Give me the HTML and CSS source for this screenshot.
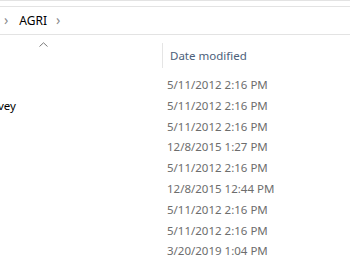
FILE: index.html
```html
<!DOCTYPE html>
<html lang="en">
<head>
    <meta charset="UTF-8" />
    <title>AGRI</title>
    <link rel="stylesheet" href="styles.css">
</head>
<body>
    <div class="window">
        <div class="top-strip"></div>
        <div class="address-bar">
            <span class="chev">&#8250;</span>
            <span class="crumb">AGRI</span>
            <span class="chev">&#8250;</span>
        </div>
        <div class="list">
            <div class="col-header">
                <div class="name-head">
                    <svg class="sort-caret" width="9" height="5" viewBox="0 0 9 5">
                        <path d="M0.5 4.5 L4.5 0.8 L8.5 4.5" fill="none" stroke="#7a7a7a" stroke-width="1" />
                    </svg>
                </div>
                <div class="date-head">Date modified</div>
            </div>
            <div class="rows">
                <div class="row"><span class="name"></span><span class="date">5/11/2012 2:16 PM</span></div>
                <div class="row"><span class="name">vey</span><span class="date">5/11/2012 2:16 PM</span></div>
                <div class="row"><span class="name"></span><span class="date">5/11/2012 2:16 PM</span></div>
                <div class="row"><span class="name"></span><span class="date">12/8/2015 1:27 PM</span></div>
                <div class="row"><span class="name"></span><span class="date">5/11/2012 2:16 PM</span></div>
                <div class="row"><span class="name"></span><span class="date">12/8/2015 12:44 PM</span></div>
                <div class="row"><span class="name"></span><span class="date">5/11/2012 2:16 PM</span></div>
                <div class="row"><span class="name"></span><span class="date">5/11/2012 2:16 PM</span></div>
                <div class="row"><span class="name"></span><span class="date">3/20/2019 1:04 PM</span></div>
            </div>
        </div>
    </div>
</body>
</html>
```

FILE: styles.css
```css
body {
    margin: 0;
    background: #ffffff;
    font-family: "Noto Sans", "Open Sans", sans-serif;
    font-size: 11.5px;
    overflow: hidden;
}
.window {
    width: 350px;
    height: 265px;
    overflow: hidden;
}
.top-strip {
    height: 5px;
    border-top: 1px solid #e3e3e3;
    border-bottom: 1px solid #e3e3e3;
}
.address-bar {
    height: 27px;
    border-bottom: 1px solid #e3e3e3;
    display: flex;
    align-items: center;
    padding-left: 4px;
    color: #000;
}
.chev {
    color: #8a8a8a;
    font-size: 14px;
    line-height: 1;
    margin-top: -2px;
}
.crumb {
    margin: 0 9px 0 11px;
    font-size: 12px;
}
.col-header {
    display: flex;
    height: 36px;
}
.name-head {
    width: 162px;
    position: relative;
}
.sort-caret {
    position: absolute;
    left: 39px;
    top: 7px;
}
.date-head {
    border-left: 1px solid #e5e5e5;
    height: 25px;
    line-height: 25px;
    margin-top: 8px;
    padding-left: 7px;
    color: #4c607a;
}
.rows {
    padding-top: 4px;
}
.row {
    display: flex;
    height: 20.8px;
    line-height: 20.8px;
}
.name {
    width: 163px;
    color: #000;
    margin-left: -2px;
}
.date {
    padding-left: 6px;
    color: #6d6d6d;
}
```
